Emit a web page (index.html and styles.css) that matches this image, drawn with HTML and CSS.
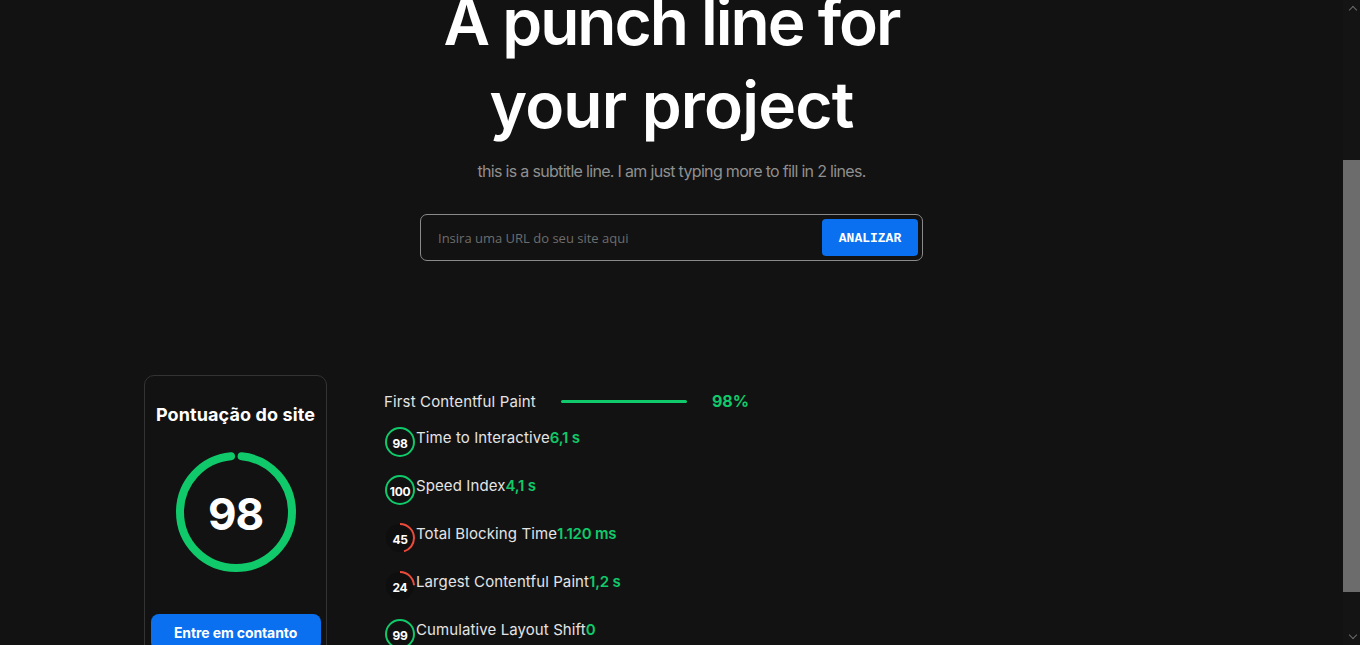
FILE: index.html
```html
<!DOCTYPE html>
<html lang="pt-BR">
<head>
<meta charset="utf-8">
<title>Pontuação do site</title>
<link rel="stylesheet" href="styles.css">
</head>
<body>
<div class="screen">
  <div class="viewport">
    <main class="page">
      <section class="hero">
        <h1 class="hero-title"><span class="title-line">A punch line for</span><span class="title-line title-line-2">your project</span></h1>
        <p class="hero-sub">this is a subtitle line. I am just typing more to fill in 2 lines.</p>
        <form class="search">
          <input class="search-input" type="text" placeholder="Insira uma URL do seu site aqui">
          <button class="search-btn" type="button">ANALIZAR</button>
        </form>
      </section>

      <section class="results">
        <aside class="score-card">
          <h2 class="score-title">Pontuação do site</h2>
          <div class="score-ring">
            <svg class="ring-svg" width="120" height="120" viewBox="0 0 120 120">
              <circle cx="60" cy="60" r="56" fill="none" stroke="#10c96a" stroke-width="8" stroke-linecap="round" stroke-dasharray="340.5 400" stroke-dashoffset="-5.7" transform="rotate(-90 60 60)"/>
            </svg>
            <span class="score-num">98</span>
          </div>
          <button class="contact-btn" type="button">Entre em contanto</button>
        </aside>

        <div class="metrics">
          <div class="metric-main">
            <span class="metric-main-label">First Contentful Paint</span>
            <span class="metric-bar"></span>
            <span class="metric-main-value">98%</span>
          </div>
          <ul class="metric-list">
            <li class="metric">
              <span class="gauge">
                <svg width="30" height="30" viewBox="0 0 30 30"><circle cx="15" cy="15" r="14" fill="#111" stroke="#10c96a" stroke-width="2"/></svg>
                <span class="gauge-num">98</span>
              </span>
              <span class="metric-label">Time to Interactive</span><span class="metric-value">6,1 s</span>
            </li>
            <li class="metric">
              <span class="gauge">
                <svg width="30" height="30" viewBox="0 0 30 30"><circle cx="15" cy="15" r="14" fill="#111" stroke="#10c96a" stroke-width="2"/></svg>
                <span class="gauge-num">100</span>
              </span>
              <span class="metric-label">Speed Index</span><span class="metric-value">4,1 s</span>
            </li>
            <li class="metric">
              <span class="gauge">
                <svg width="30" height="30" viewBox="0 0 30 30"><circle cx="15" cy="15" r="14" fill="#0e0e0e" stroke="none"/><circle cx="15" cy="15" r="14" fill="none" stroke="#ec4a3b" stroke-width="2" stroke-dasharray="39.6 100" transform="rotate(-90 15 15)"/></svg>
                <span class="gauge-num">45</span>
              </span>
              <span class="metric-label">Total Blocking Time</span><span class="metric-value">1.120 ms</span>
            </li>
            <li class="metric">
              <span class="gauge">
                <svg width="30" height="30" viewBox="0 0 30 30"><circle cx="15" cy="15" r="14" fill="#0e0e0e" stroke="none"/><circle cx="15" cy="15" r="14" fill="none" stroke="#ec4a3b" stroke-width="2" stroke-dasharray="21.1 100" transform="rotate(-90 15 15)"/></svg>
                <span class="gauge-num">24</span>
              </span>
              <span class="metric-label">Largest Contentful Paint</span><span class="metric-value">1,2 s</span>
            </li>
            <li class="metric">
              <span class="gauge">
                <svg width="30" height="30" viewBox="0 0 30 30"><circle cx="15" cy="15" r="14" fill="#111" stroke="#10c96a" stroke-width="2"/></svg>
                <span class="gauge-num">99</span>
              </span>
              <span class="metric-label">Cumulative Layout Shift</span><span class="metric-value">0</span>
            </li>
          </ul>
        </div>
      </section>
    </main>
  </div>
  <div class="scrollbar">
    <span class="sb-arrow sb-up"></span>
    <div class="sb-track"><div class="sb-thumb"></div></div>
    <span class="sb-arrow sb-down"></span>
  </div>
</div>
</body>
</html>
```

FILE: styles.css
```css
* { box-sizing: border-box; }
html, body { margin: 0; padding: 0; height: 100%; }
body {
  background: #121212;
  color: #fff;
  font-family: Inter, "Noto Sans", sans-serif;
  overflow: hidden;
}
.screen {
  display: flex;
  width: 1360px;
  height: 645px;
}
.viewport {
  flex: 1;
  overflow: hidden;
}
.page {
  margin-top: -20px;
}

/* hero */
.hero {
  display: flex;
  flex-direction: column;
  align-items: center;
}
.hero-title {
  margin: 0;
  font-size: 64px;
  line-height: 83px;
  font-weight: 600;
  letter-spacing: -2px;
  text-align: center;
  color: #fff;
}
.title-line { display: block; }
.title-line-2 { letter-spacing: -0.8px; }
.hero-sub {
  margin: 13px 0 0;
  font-size: 16px;
  line-height: 24px;
  color: #8f8f8f;
  letter-spacing: -0.68px;
}
.search {
  margin-top: 31px;
  width: 503px;
  height: 47px;
  border: 1px solid #8a8a8a;
  border-radius: 7px;
  display: flex;
  align-items: center;
  padding: 0 4px 0 15px;
}
.search-input {
  flex: 1;
  background: transparent;
  border: 0;
  outline: none;
  font-family: "Open Sans", sans-serif;
  font-size: 13px;
  color: #ddd;
}
.search-input::placeholder { color: #6d6d6d; }
.search-btn {
  width: 96px;
  height: 37px;
  border: 0;
  border-radius: 4px;
  background: #0a70f0;
  color: #fff;
  font-family: "Liberation Mono", monospace;
  font-weight: 700;
  font-size: 13px;
  padding-top: 3px;
}

/* results */
.results {
  margin: 114px auto 0;
  width: 1055px;
  display: flex;
  gap: 57px;
}
.score-card {
  width: 183px;
  height: 300px;
  flex: none;
  border: 1px solid #333;
  border-radius: 10px;
  padding: 27px 5px 0;
  display: flex;
  flex-direction: column;
  align-items: center;
}
.score-title {
  margin: 0;
  font-size: 18px;
  line-height: 24px;
  font-weight: 700;
  letter-spacing: 0.1px;
}
.score-ring {
  margin-top: 25px;
  display: grid;
  place-items: center;
  width: 120px;
  height: 120px;
}
.score-ring > * { grid-area: 1 / 1; }
.ring-svg { display: block; }
.score-num {
  font-size: 44px;
  font-weight: 700;
  letter-spacing: -1px;
  padding-top: 4px;
}
.contact-btn {
  margin-top: 42px;
  width: 170px;
  height: 36px;
  flex: none;
  border: 0;
  border-radius: 8px;
  background: #0a70f0;
  color: #fff;
  font-family: Inter, sans-serif;
  font-weight: 700;
  font-size: 14px;
  letter-spacing: -0.1px;
}

.metrics {
  padding-top: 15px;
}
.metric-main {
  display: flex;
  align-items: center;
  height: 22px;
  font-size: 15px;
  color: #e4e4e4;
  letter-spacing: 0.15px;
}
.metric-bar {
  width: 126px;
  height: 3px;
  background: #10c96a;
  margin: 0 25px;
  border-radius: 2px;
}
.metric-main-value {
  color: #10c96a;
  font-weight: 700;
  font-size: 16px;
  letter-spacing: 0;
}
.metric-list {
  list-style: none;
  margin: 15px 0 0;
  padding: 0;
  display: flex;
  flex-direction: column;
  gap: 18px;
}
.metric {
  display: flex;
  align-items: flex-start;
  height: 30px;
  font-size: 15px;
  line-height: 22px;
  letter-spacing: 0.1px;
}
.gauge {
  display: grid;
  place-items: center;
  width: 32px;
  height: 30px;
  flex: none;
}
.gauge > * { grid-area: 1 / 1; }
.gauge svg { display: block; }
.gauge-num {
  font-size: 12px;
  font-weight: 700;
  color: #fff;
  padding-top: 3px;
  letter-spacing: -0.3px;
}
.metric-label { color: #e4e4e4; }
.metric-value { color: #10c96a; font-weight: 600; letter-spacing: -0.2px; }

/* fake scrollbar */
.scrollbar {
  width: 17px;
  flex: none;
  background: #141414;
  display: flex;
  flex-direction: column;
}
.sb-arrow {
  height: 17px;
  flex: none;
  display: flex;
  align-items: center;
  justify-content: center;
}
.sb-arrow::before {
  content: "";
  width: 5px;
  height: 5px;
  border-left: 1.5px solid #6a6a6a;
  border-top: 1.5px solid #6a6a6a;
}
.sb-up::before { transform: translate(1px, 1px) rotate(45deg); }
.sb-down::before { transform: translate(1px, -2px) rotate(225deg); }
.sb-track {
  flex: 1;
  padding-top: 143px;
}
.sb-thumb {
  height: 432px;
  background: #6c6c6c;
}
```
